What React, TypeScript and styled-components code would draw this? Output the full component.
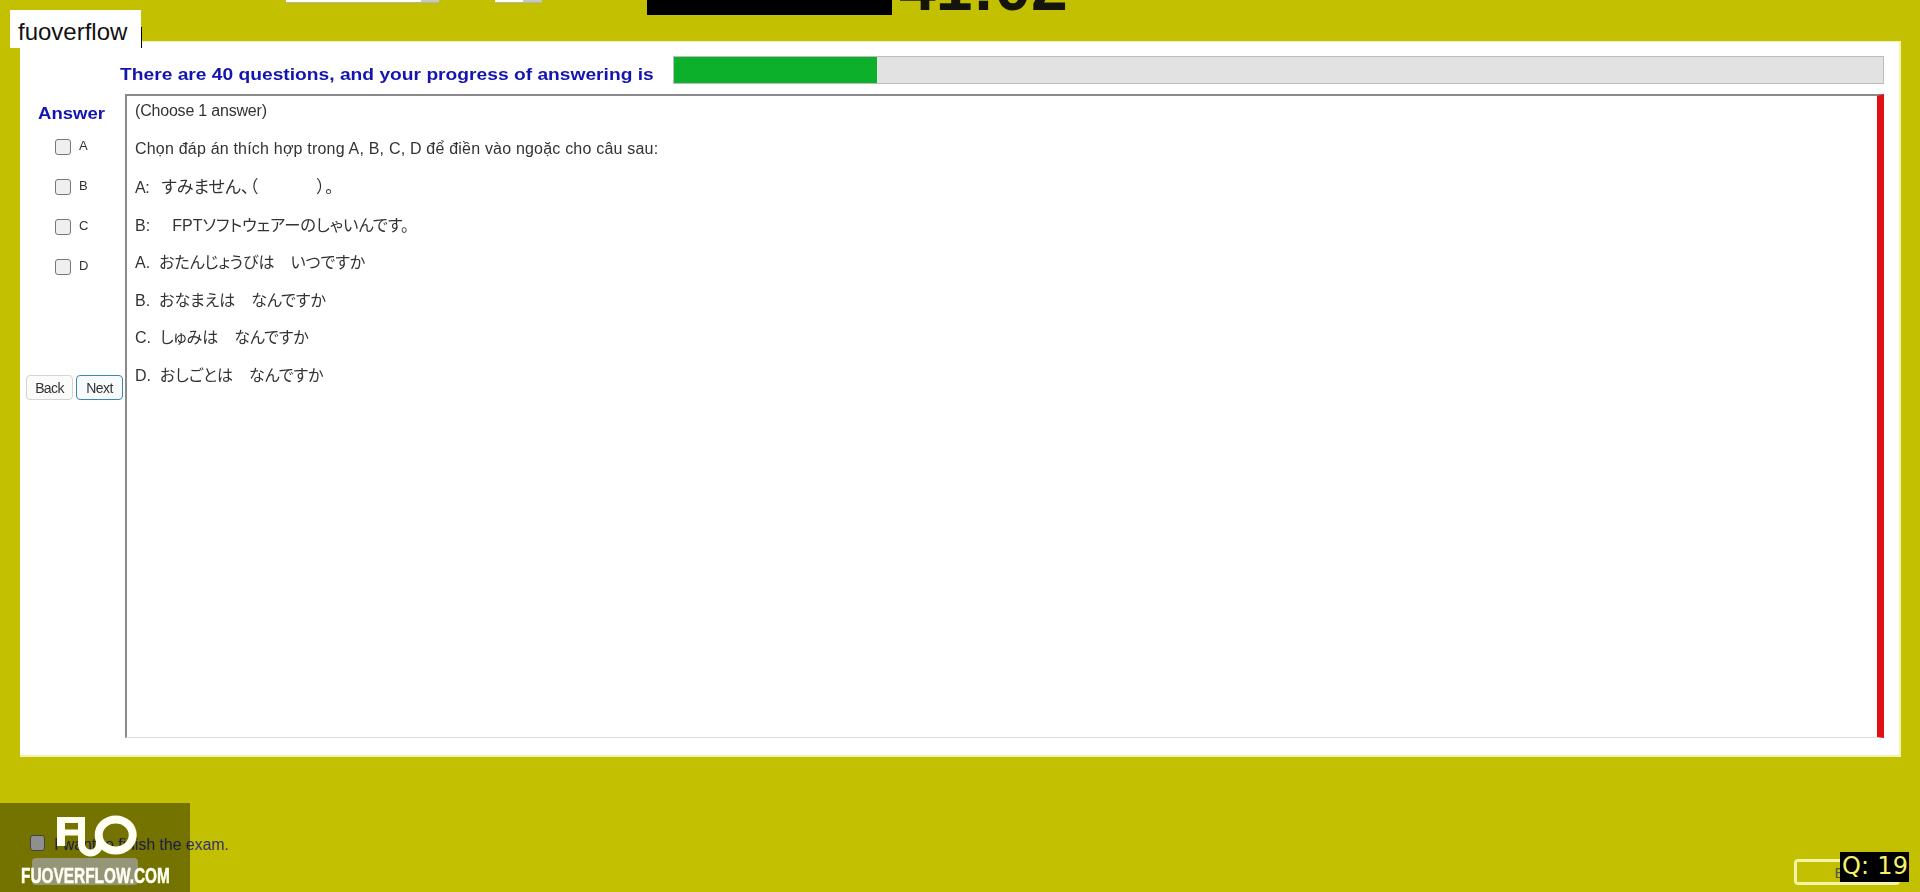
import React from 'react';
import styled, { createGlobalStyle } from 'styled-components';

const GlobalStyle = createGlobalStyle`
  html, body {
    margin: 0;
    padding: 0;
    background: #c2c000;
  }
  * {
    box-sizing: border-box;
  }
`;

const Page = styled.div`
  position: relative;
  width: 1920px;
  height: 892px;
  overflow: hidden;
  background: #c2c000;
  padding: 0 19px 0 20px;
  font-family: 'Liberation Sans', Arial, sans-serif;
  display: flex;
  flex-direction: column;
`;

const TopBar = styled.div`
  height: 41px;
  flex: none;
  display: flex;
  align-items: flex-start;
  padding-left: 266px;
`;

const Dropdown = styled.div<{ $width: number; $arrow: number; $gap: number }>`
  width: ${(p) => p.$width}px;
  height: 23px;
  margin-top: -20px;
  margin-right: ${(p) => p.$gap}px;
  border-bottom: 1px solid #b5b5a0;
  background: linear-gradient(to right, #fff calc(100% - ${(p) => p.$arrow}px), #c8c8c8 0);
`;

const TimerBlock = styled.div`
  width: 245px;
  height: 15px;
  background: #000;
  margin-right: 7px;
  flex: none;
`;

const Timer = styled.div`
  font-size: 66px;
  line-height: 66px;
  font-weight: 700;
  color: #14140a;
  margin-top: -46px;
`;

const Panel = styled.div`
  height: 716px;
  flex: none;
  background: #fff;
  border: 1px solid #f3f2ae;
  border-width: 1px 2px 2px 0;
  padding: 14px 15px 0 1px;
  filter: blur(0.3px);
`;

const ProgressRow = styled.div`
  display: flex;
  align-items: flex-start;
  height: 28px;
  padding-left: 99px;
`;

const ProgressLabel = styled.div`
  width: 553px;
  padding-top: 9px;
  font-size: 17px;
  line-height: 20px;
  font-weight: 700;
  color: #1414b0;
  white-space: nowrap;
  transform: scaleX(1.13);
  transform-origin: left center;
`;

const ProgressTrack = styled.div`
  flex: 1;
  height: 28px;
  background: #e2e2e2;
  border: 1px solid #bcbcbc;
`;

const ProgressFill = styled.div`
  height: 100%;
  background: #0db02b;
`;

const Body = styled.div`
  display: flex;
  margin-top: 10px;
  height: 644px;
`;

const Sidebar = styled.div`
  width: 104px;
  flex: none;
  padding-top: 11px;
`;

const AnswerTitle = styled.div`
  height: 18px;
  line-height: 18px;
  margin-left: 17px;
  font-size: 17px;
  font-weight: 700;
  color: #1414b0;
  transform: scaleX(1.09);
  transform-origin: left center;
`;

const OptionList = styled.div`
  margin-top: 4px;
  display: flex;
  flex-direction: column;
`;

const Option = styled.label`
  height: 40px;
  display: flex;
  align-items: center;
  padding-left: 34px;
  gap: 8px;
  font-size: 13px;
  color: #333;
`;

const OptionBox = styled.input.attrs({ type: 'checkbox' })`
  width: 16px;
  height: 16px;
  margin: 0;
  appearance: none;
  background: #efefef;
  border: 1px solid #777;
  border-radius: 3px;
`;

const OptionLetter = styled.span`
  margin-top: -3px;
`;

const NavRow = styled.div`
  margin-top: 88px;
  padding-left: 5px;
  display: flex;
  gap: 3px;
`;

const NavButton = styled.button<{ $active?: boolean }>`
  width: 47px;
  height: 25px;
  padding: 0;
  font-family: 'Liberation Sans', Arial, sans-serif;
  font-size: 14px;
  letter-spacing: -0.6px;
  color: #333;
  background: ${(p) => (p.$active ? '#f8fbfd' : '#fbfbfb')};
  border: ${(p) => (p.$active ? '1.5px solid #3b87ad' : '1px solid #d4d4d4')};
  border-radius: 4px;
`;

const Question = styled.div`
  flex: 1;
  border-top: 2px solid #8a8a8a;
  border-left: 2px solid #8a8a8a;
  border-right: 7px solid #e30f14;
  border-bottom: 1px solid #dedede;
  padding: 4px 0 0 8px;
  display: flex;
  flex-direction: column;
  gap: 15.5px;
`;

const Line = styled.div<{ $tracking?: number }>`
  height: 22px;
  line-height: 22px;
  font-size: 16px;
  letter-spacing: ${(p) => p.$tracking ?? 0}px;
  color: #333;
  white-space: pre;
  font-family: 'Liberation Sans', 'Noto Sans CJK JP', sans-serif;
`;

const Kana = styled.span<{ $size?: number }>`
  font-family: 'Noto Sans CJK JP', sans-serif;
  font-size: ${(p) => p.$size ?? 16}px;
  letter-spacing: 0;
  font-feature-settings: 'palt';
`;

const Footer = styled.div`
  flex: 1;
  display: flex;
  justify-content: space-between;
  padding-top: 78px;
`;

const FinishBlock = styled.div`
  padding-left: 10px;
`;

const FinishRow = styled.label`
  display: flex;
  align-items: center;
  gap: 9px;
  height: 16px;
  font-size: 15.8px;
  color: #34346e;
`;

const FinishBox = styled.input.attrs({ type: 'checkbox' })`
  width: 15px;
  height: 16px;
  margin: 0;
  appearance: none;
  background: #eeeeee;
  border: 1px solid #6f6f6f;
  border-radius: 3px;
`;

const FinishText = styled.span`
  margin-top: 3px;
`;

const FinishButton = styled.button`
  display: block;
  margin: 7px 0 0 2px;
  width: 106px;
  height: 27px;
  background: #f8f8c8;
  border: none;
  border-radius: 4px;
`;

const ExitButton = styled.button`
  width: 106px;
  height: 26px;
  margin: 24px 1px 0 0;
  padding: 0;
  background: transparent;
  border: 3px solid #f4f3a8;
  border-radius: 4px;
  font-family: 'Liberation Sans', Arial, sans-serif;
  font-size: 15px;
  color: #555;
`;

const Watermark = styled.div`
  position: absolute;
  left: 10px;
  top: 10px;
  width: 131px;
  height: 38px;
  background: #fff;
  padding-left: 8px;
  font-size: 24px;
  line-height: 43px;
  color: #111;

  &::after {
    content: '';
    position: absolute;
    right: -1px;
    top: 17px;
    width: 1px;
    height: 21px;
    background: #000;
  }
`;

const LogoOverlay = styled.div`
  position: absolute;
  left: 0;
  bottom: 0;
  width: 190px;
  height: 89px;
  background: rgba(0, 0, 0, 0.4);
`;

const LogoMark = styled.svg`
  position: absolute;
  left: 50px;
  top: 8px;
`;

const LogoText = styled.div`
  position: absolute;
  left: 21px;
  top: 62px;
  font-size: 22px;
  line-height: 22px;
  font-weight: 700;
  color: #fffff2;
  white-space: nowrap;
  -webkit-text-stroke: 0.5px #fffff2;
  transform: scaleX(0.7);
  transform-origin: left center;
`;

const QuestionBadge = styled.div`
  position: absolute;
  left: 1840px;
  top: 852px;
  width: 69px;
  height: 30px;
  background: #000;
  padding-left: 2px;
  font-family: 'DejaVu Sans', sans-serif;
  font-size: 24px;
  line-height: 29px;
  letter-spacing: 0.2px;
  color: #f5f26a;
  white-space: pre;
`;

const answers = ['A', 'B', 'C', 'D'];

function App() {
  const progress = 16.8;

  return (
    <Page>
      <GlobalStyle />
      <TopBar>
        <Dropdown $width={153} $arrow={18} $gap={56} />
        <Dropdown $width={47} $arrow={19} $gap={105} />
        <TimerBlock />
        <Timer>41:02</Timer>
      </TopBar>

      <Panel>
        <ProgressRow>
          <ProgressLabel>There are 40 questions, and your progress of answering is</ProgressLabel>
          <ProgressTrack>
            <ProgressFill style={{ width: `${progress}%` }} />
          </ProgressTrack>
        </ProgressRow>

        <Body>
          <Sidebar>
            <AnswerTitle>Answer</AnswerTitle>
            <OptionList>
              {answers.map((a) => (
                <Option key={a}>
                  <OptionBox />
                  <OptionLetter>{a}</OptionLetter>
                </Option>
              ))}
            </OptionList>
            <NavRow>
              <NavButton>Back</NavButton>
              <NavButton $active>Next</NavButton>
            </NavRow>
          </Sidebar>

          <Question>
            <Line $tracking={-0.2}>(Choose 1 answer)</Line>
            <Line $tracking={0.2}>Chọn đáp án thích hợp trong A, B, C, D để điền vào ngoặc cho câu sau:</Line>
            <Line $tracking={-0.4}>
              A:   <Kana $size={17}>すみません、（　　　  ）。</Kana>
            </Line>
            <Line>
              B:     FPT<Kana $size={16.3}>ソフトウェアーのしゃいんです。</Kana>
            </Line>
            <Line>
              A.  <Kana>おたんじょうびは　いつですか</Kana>
            </Line>
            <Line>
              B.  <Kana>おなまえは　なんですか</Kana>
            </Line>
            <Line>
              C.  <Kana>しゅみは　なんですか</Kana>
            </Line>
            <Line>
              D.  <Kana>おしごとは　なんですか</Kana>
            </Line>
          </Question>
        </Body>
      </Panel>

      <Footer>
        <FinishBlock>
          <FinishRow>
            <FinishBox />
            <FinishText>I want to finish the exam.</FinishText>
          </FinishRow>
          <FinishButton />
        </FinishBlock>
        <ExitButton>Exit</ExitButton>
      </Footer>

      <Watermark>fuoverflow</Watermark>

      <LogoOverlay>
        <LogoMark width="92" height="50" viewBox="0 0 92 50" fill="none" stroke="#fffff2">
          <path d="M11 35V6" strokeWidth="8" />
          <path d="M7 9H35M11 21.5H31" strokeWidth="6" />
          <path d="M31.5 6V33a9 9 0 0 0 18 0V26" strokeWidth="7" />
          <ellipse cx="65.7" cy="24" rx="17" ry="15.5" strokeWidth="8" />
        </LogoMark>
        <LogoText>FUOVERFLOW.COM</LogoText>
      </LogoOverlay>

      <QuestionBadge>Q: 19</QuestionBadge>
    </Page>
  );
}

export default App;
